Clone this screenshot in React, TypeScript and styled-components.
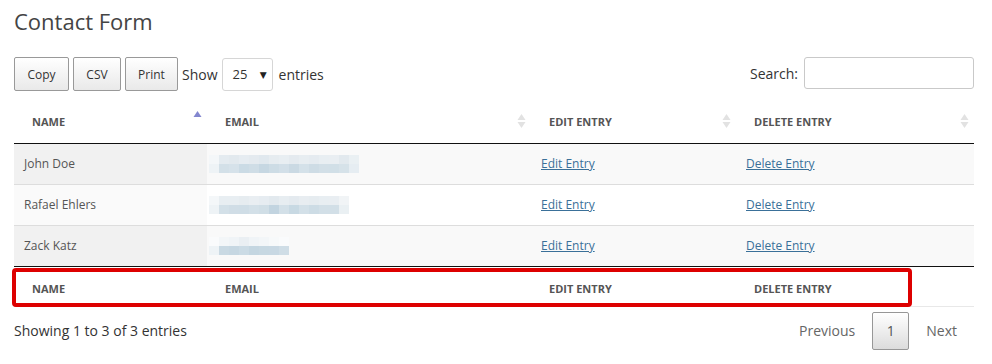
import React from "react";
import styled, { createGlobalStyle } from "styled-components";

const Global = createGlobalStyle`
  html, body { margin: 0; padding: 0; background: #fff; }
  body { font-family: "Open Sans", "DejaVu Sans", sans-serif; color: #333; }
`;

const Page = styled.div`
  width: 992px;
  padding: 0 18px 0 14px;
  box-sizing: border-box;
`;

const Title = styled.h1`
  margin: 0;
  padding-top: 6px;
  height: 40px;
  font-size: 22px;
  font-weight: 400;
  color: #444;
  line-height: 30px;
`;

const Toolbar = styled.div`
  display: flex;
  align-items: center;
  justify-content: space-between;
  margin-top: 11px;
  height: 34px;
`;

const Left = styled.div`
  display: flex;
  align-items: center;
  gap: 4px;
`;

const Btn = styled.button<{ $w: number }>`
  width: ${(p) => p.$w}px;
  height: 34px;
  border: 1px solid #999;
  border-radius: 2px;
  background: linear-gradient(to bottom, #fff 0%, #e9e9e9 100%);
  font-family: inherit;
  font-size: 12px;
  color: #333;
  padding: 0;
`;

const Label = styled.span`
  font-size: 14px;
  color: #333;
`;

const Select = styled.div`
  display: flex;
  align-items: center;
  justify-content: space-between;
  width: 51px;
  height: 33px;
  box-sizing: border-box;
  border: 1px solid #d6d6d6;
  border-radius: 3px;
  padding: 0 5px 0 10px;
  font-size: 13px;
  color: #333;
  margin: 0 2px 0 0;
`;

const Caret = styled.span`
  font-size: 9px;
  color: #222;
`;

const SearchBox = styled.div`
  display: flex;
  align-items: center;
  gap: 6px;
  margin-top: -2px;
`;

const Input = styled.div`
  width: 170px;
  height: 32px;
  box-sizing: border-box;
  border: 1px solid #c9c9c9;
  border-radius: 3px;
  background: #fff;
`;

const TableWrap = styled.div`
  position: relative;
  margin-top: 9px;
`;

const Table = styled.table`
  width: 960px;
  border-collapse: collapse;
  table-layout: fixed;
`;

const Th = styled.th<{ $foot?: boolean }>`
  position: relative;
  text-align: left;
  font-size: 11px;
  font-weight: 700;
  color: #555;
  text-transform: uppercase;
  padding: ${(p) => (p.$foot ? "4px 18px 0" : "0 18px")};
  height: ${(p) => (p.$foot ? "40px" : "43px")};
  box-sizing: border-box;
  border-bottom: ${(p) => (p.$foot ? "1px solid #e8e8e8" : "1px solid #111")};
  border-top: ${(p) => (p.$foot ? "1px solid #111" : "none")};
  vertical-align: middle;
`;

const SortIcon = styled.svg`
  position: absolute;
  right: 5px;
  top: 50%;
  transform: translateY(-50%);
`;

const Tr = styled.tr<{ $odd: boolean }>`
  background: ${(p) => (p.$odd ? "#f9f9f9" : "#fff")};
`;

const Td = styled.td<{ $sorted?: boolean; $odd?: boolean }>`
  height: 41px;
  box-sizing: border-box;
  padding: 0 10px;
  font-size: 12px;
  color: #555;
  border-top: 1px solid #ddd;
  vertical-align: middle;
  background: ${(p) => (p.$sorted ? (p.$odd ? "#f1f1f1" : "#fafafa") : "transparent")};
`;

const Link = styled.a`
  color: #3a7099;
  text-decoration: underline;
  font-size: 12px;
`;

const Mosaic = styled.div`
  display: grid;
  grid-auto-flow: row;
  margin-left: -8px;
`;

const MRow = styled.div`
  display: flex;
  height: 9px;
`;

const Cell = styled.span`
  display: block;
  width: 10px;
  height: 9px;
`;

const Annotation = styled.div`
  position: absolute;
  left: -2px;
  top: 168px;
  width: 900px;
  height: 39px;
  box-sizing: border-box;
  border: 4px solid #dd0000;
  border-radius: 4px;
  pointer-events: none;
`;

const Footer = styled.div`
  display: flex;
  align-items: center;
  justify-content: space-between;
  margin-top: 5px;
`;

const Info = styled.div`
  font-size: 14px;
  color: #333;
`;

const Pager = styled.div`
  display: flex;
  align-items: center;
`;

const PageLink = styled.span`
  font-size: 14px;
  color: #666;
  padding: 0 17px;
`;

const PageBtn = styled.span`
  display: flex;
  align-items: center;
  justify-content: center;
  width: 37px;
  height: 38px;
  box-sizing: border-box;
  border: 1px solid #979797;
  border-radius: 2px;
  background: linear-gradient(to bottom, #fff 0%, #dcdcdc 100%);
  font-size: 14px;
  color: #555;
`;

const Both = () => (
  <SortIcon width="9" height="16" viewBox="0 0 9 16">
    <path d="M4.5 1 L8.5 7 L0.5 7 Z" fill="#e2e2e2" />
    <path d="M4.5 15 L8.5 9 L0.5 9 Z" fill="#e2e2e2" />
  </SortIcon>
);

const Asc = () => (
  <SortIcon width="9" height="16" viewBox="0 0 9 16" style={{ marginTop: -4 }}>
    <path d="M4.5 2 L8.5 8 L0.5 8 Z" fill="#8387cf" />
  </SortIcon>
);

const palettes: string[][][] = [
  [
    ["#f4f7f9", "#e4ebf0", "#e2e9ee", "#e6ecf1", "#e4eaef", "#e0e8ee", "#e6ecf0", "#e8eef2", "#e4eaef", "#e7edf1", "#e5ebf0", "#e8eef2", "#e9eef2", "#e2e9ee", "#eaf0f3"],
    ["#eef3f6", "#d3e0e8", "#d6e2ea", "#cbdbe5", "#cfdde6", "#c6d7e2", "#cddce5", "#d2dfe8", "#cad9e3", "#d4e1e9", "#cedce5", "#d2dfe7", "#d1dfe7", "#d6e2e9", "#e6edf2"],
  ],
  [
    ["#f4f7f9", "#e8eef2", "#e8eef2", "#e6ecf0", "#e9eef2", "#e6ecf1", "#e2e9ee", "#e7edf1", "#e4eaef", "#e8edf1", "#e6ecf0", "#e8eef2", "#e9eef2", "#f1f4f6"],
    ["#eef3f6", "#d3e0e8", "#d0dde6", "#cfdde6", "#d3e0e8", "#d0dee6", "#c2d4e0", "#d3e0e8", "#c8d9e3", "#d3e0e8", "#cddce5", "#d2dfe7", "#d2dfe7", "#eaf0f3"],
  ],
  [
    ["#fafbfc", "#f3f6f8", "#f0f4f7", "#eaeff3", "#f0f4f7", "#f3f6f8", "#f7f9fa", "#fafbfc"],
    ["#eef3f6", "#c9d9e3", "#c6d7e2", "#cbdbe5", "#c4d6e1", "#c7d8e2", "#c8d8e3", "#cfdde6"],
  ],
];

const Blur = ({ p }: { p: number }) => (
  <Mosaic>
    {palettes[p].map((row, i) => (
      <MRow key={i}>
        {row.map((c, j) => (
          <Cell key={j} style={{ background: c }} />
        ))}
      </MRow>
    ))}
  </Mosaic>
);

const rows = [
  { name: "John Doe", m: 0 },
  { name: "Rafael Ehlers", m: 1 },
  { name: "Zack Katz", m: 2 },
];

export default function App() {
  return (
    <Page>
      <Global />
      <Title>Contact Form</Title>
      <Toolbar>
        <Left>
          <Btn $w={55}>Copy</Btn>
          <Btn $w={48}>CSV</Btn>
          <Btn $w={53}>Print</Btn>
          <Label>Show</Label>
          <Select>
            <span>25</span>
            <Caret>▼</Caret>
          </Select>
          <Label>entries</Label>
        </Left>
        <SearchBox>
          <Label>Search:</Label>
          <Input />
        </SearchBox>
      </Toolbar>
      <TableWrap>
        <Table>
          <colgroup>
            <col style={{ width: 193 }} />
            <col style={{ width: 324 }} />
            <col style={{ width: 205 }} />
            <col style={{ width: 238 }} />
          </colgroup>
          <thead>
            <tr>
              <Th>Name<Asc /></Th>
              <Th>Email<Both /></Th>
              <Th>Edit Entry<Both /></Th>
              <Th>Delete Entry<Both /></Th>
            </tr>
          </thead>
          <tbody>
            {rows.map((r, i) => (
              <Tr key={r.name} $odd={i % 2 === 0}>
                <Td $sorted $odd={i % 2 === 0}>{r.name}</Td>
                <Td><Blur p={r.m} /></Td>
                <Td><Link>Edit Entry</Link></Td>
                <Td><Link>Delete Entry</Link></Td>
              </Tr>
            ))}
          </tbody>
          <tfoot>
            <tr>
              <Th $foot>Name</Th>
              <Th $foot>Email</Th>
              <Th $foot>Edit Entry</Th>
              <Th $foot>Delete Entry</Th>
            </tr>
          </tfoot>
        </Table>
        <Annotation />
      </TableWrap>
      <Footer>
        <Info>Showing 1 to 3 of 3 entries</Info>
        <Pager>
          <PageLink>Previous</PageLink>
          <PageBtn>1</PageBtn>
          <PageLink>Next</PageLink>
        </Pager>
      </Footer>
    </Page>
  );
}
